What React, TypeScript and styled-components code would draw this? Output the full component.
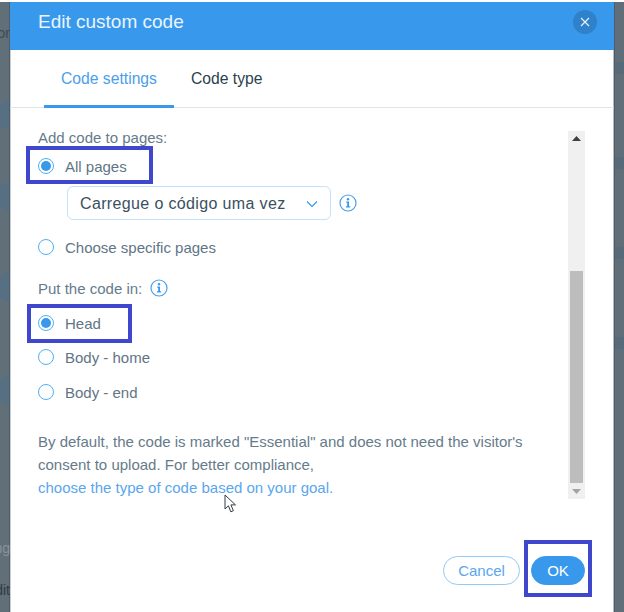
import React from 'react';
import styled, { createGlobalStyle } from 'styled-components';

const GlobalStyle = createGlobalStyle`
	html, body {
		margin: 0;
		padding: 0;
		background: #ffffff;
	}

	body {
		font-family: "Liberation Sans", Arial, sans-serif;
	}
`;

const Page = styled.div`
	position: relative;
	width: 624px;
	height: 612px;
	padding-top: 2px;
	box-sizing: border-box;
	display: flex;
	overflow: hidden;
`;

const LeftBackdrop = styled.div`
	width: 10px;
	flex: none;
	overflow: hidden;
	display: flex;
	flex-direction: column;
	align-items: flex-end;
	font-size: 14px;
	box-shadow: inset -1px 0 0 #4f5c65;
	background:
		radial-gradient(circle at 12px 113px, #566f82 0 15px, transparent 16px),
		radial-gradient(circle at 12px 195px, #566f82 0 15px, transparent 16px),
		radial-gradient(circle at 12px 285px, #566f82 0 15px, transparent 16px),
		radial-gradient(circle at 12px 388px, #566f82 0 15px, transparent 16px),
		#616f79;
`;

const RightBackdrop = styled.div`
	width: 10px;
	flex: none;
	box-shadow: inset 1px 0 0 #4f5c65;
	background:
		linear-gradient(#566a7a, #566a7a) 0 60px / 100% 12px no-repeat,
		linear-gradient(#566a7a, #566a7a) 0 155px / 100% 12px no-repeat,
		linear-gradient(#566a7a, #566a7a) 0 245px / 100% 12px no-repeat,
		linear-gradient(#566a7a, #566a7a) 0 335px / 100% 12px no-repeat,
		#5f6e78;
`;

const BackdropText = styled.span<{ $top: number; $color: string }>`
	margin-top: ${p => p.$top}px;
	line-height: 16px;
	white-space: nowrap;
	color: ${p => p.$color};
`;

const Modal = styled.div`
	width: 604px;
	flex: none;
	display: flex;
	flex-direction: column;
	background: #ffffff;
	box-shadow: inset 1px 0 0 #c9ced2, inset -1px 0 0 #b4bbc1;
`;

const Header = styled.header`
	height: 48px;
	padding: 0 17px 8px 28px;
	box-sizing: border-box;
	display: flex;
	justify-content: space-between;
	align-items: center;
	background: #3899ec;
`;

const Title = styled.h1`
	margin: 0;
	font-size: 19px;
	font-weight: 400;
	color: #eaf4fd;
`;

const CloseButton = styled.button`
	width: 24px;
	height: 24px;
	padding: 0;
	border: 0;
	border-radius: 50%;
	display: flex;
	justify-content: center;
	align-items: center;
	background: #2f81c9;
`;

const Tabs = styled.nav`
	height: 58px;
	padding-left: 34px;
	box-sizing: border-box;
	display: flex;
	border-bottom: 1px solid #dfe5eb;
`;

const Tab = styled.div<{ $active?: boolean }>`
	height: 58px;
	box-sizing: border-box;
	padding: 3px 17px 0;
	display: flex;
	align-items: center;
	font-size: 15.7px;
	color: ${p => (p.$active ? '#4a9eeb' : '#2b3f4e')};
	border-bottom: 3px solid ${p => (p.$active ? '#3899ec' : 'transparent')};
`;

const Body = styled.div`
	height: 392px;
	padding: 23px 29px 0 28px;
	box-sizing: border-box;
	display: flex;
	justify-content: space-between;
`;

const Form = styled.div`
	width: 500px;
	display: flex;
	flex-direction: column;
`;

const Label = styled.div<{ $top: number }>`
	margin-top: ${p => p.$top}px;
	height: 20px;
	display: flex;
	align-items: center;
	gap: 8px;
	font-size: 15px;
	color: #667b8a;
`;

const RadioRow = styled.div<{ $top: number }>`
	position: relative;
	margin-top: ${p => p.$top}px;
	height: 20px;
	display: flex;
	align-items: center;
	gap: 11px;
	font-size: 15px;
	color: #5f7586;
`;

const RadioDot = styled.span<{ $checked?: boolean }>`
	width: 16px;
	height: 16px;
	flex: none;
	box-sizing: border-box;
	border: 1px solid #4eb0f5;
	border-radius: 50%;
	display: flex;
	justify-content: center;
	align-items: center;
	background: #ffffff;

	&::after {
		content: '';
		width: 10px;
		height: 10px;
		border-radius: 50%;
		background: ${p => (p.$checked ? '#3899ec' : 'transparent')};
	}
`;

// the blue boxes are annotations drawn on top of the dialog
const Highlight = styled.span<{ $left: number; $top: number; $width: number; $height: number }>`
	position: absolute;
	left: ${p => p.$left}px;
	top: ${p => p.$top}px;
	width: ${p => p.$width}px;
	height: ${p => p.$height}px;
	box-sizing: border-box;
	border: 4px solid #3f48cc;
	pointer-events: none;
`;

const SelectRow = styled.div`
	margin: 10px 0 0 29px;
	display: flex;
	align-items: center;
	gap: 8px;
`;

const Select = styled.div`
	width: 264px;
	height: 34px;
	padding: 1px 12px 0;
	box-sizing: border-box;
	display: flex;
	justify-content: space-between;
	align-items: center;
	border: 1px solid #c4e2fb;
	border-radius: 6px;
	font-size: 16px;
	letter-spacing: 0.36px;
	color: #3a5060;
`;

const Note = styled.p`
	margin: 28px 0 0;
	font-size: 15px;
	line-height: 23px;
	color: #667b8a;
	white-space: nowrap;
`;

const NoteLink = styled.a`
	color: #5aa6ee;
	text-decoration: none;
`;

const Scrollbar = styled.div`
	width: 17px;
	height: 368px;
	flex: none;
	display: flex;
	flex-direction: column;
	align-items: center;
	background: #f0f0f0;
`;

const ScrollTop = styled.div`
	flex: 1;
	padding-top: 5px;
	display: flex;
	align-items: flex-start;
	justify-content: center;
`;

const ScrollBottom = styled.div`
	height: 16px;
	flex: none;
	display: flex;
	align-items: center;
	justify-content: center;
`;

const ScrollThumb = styled.div`
	width: 13px;
	height: 212px;
	flex: none;
	background: #bdbdbd;
`;

const Footer = styled.footer`
	position: relative;
	flex: 1;
	padding: 0 29px 27px 0;
	box-sizing: border-box;
	display: flex;
	justify-content: flex-end;
	align-items: flex-end;
	gap: 11px;
`;

const Button = styled.button<{ $primary?: boolean }>`
	height: 29px;
	padding: 0;
	box-sizing: border-box;
	width: ${p => (p.$primary ? '54px' : '77px')};
	border: 1px solid ${p => (p.$primary ? '#3899ec' : '#93c9f5')};
	border-radius: 15px;
	font-family: inherit;
	font-size: 15px;
	color: ${p => (p.$primary ? '#ffffff' : '#5aa6ee')};
	background: ${p => (p.$primary ? '#3899ec' : '#ffffff')};
`;

const CursorMark = styled.svg`
	position: absolute;
	left: 224px;
	top: 494px;
`;

const InfoIcon = () => (
	<svg width="18" height="18" viewBox="0 0 18 18">
		<circle cx="9" cy="9" r="8" fill="#ffffff" stroke="#4a9eeb" strokeWidth="1.2" />
		<circle cx="9" cy="5.2" r="1.2" fill="#3899ec" />
		<path d="M7.2 7.6H10v4.6h1.2v1.2H7v-1.2h1.2V8.8h-1z" fill="#3899ec" />
	</svg>
);

const Radio = ({ label, checked, top, children }: { label: string; checked?: boolean; top: number; children?: React.ReactNode }) => (
	<RadioRow $top={top}>
		<RadioDot $checked={checked} />
		{label}
		{children}
	</RadioRow>
);

export default function App() {
	return (
		<Page>
			<GlobalStyle />

			<LeftBackdrop>
				<BackdropText $top={23} $color="#3d4a53">or</BackdropText>
				<BackdropText $top={499} $color="#87929a">ng</BackdropText>
				<BackdropText $top={26} $color="#2f3a42">dit</BackdropText>
			</LeftBackdrop>

			<Modal>
				<Header>
					<Title>Edit custom code</Title>
					<CloseButton aria-label="Close">
						<svg width="10" height="10" viewBox="0 0 10 10">
							<path d="M1 1l8 8M9 1l-8 8" stroke="#e6f1fb" strokeWidth="1.2" fill="none" />
						</svg>
					</CloseButton>
				</Header>

				<Tabs>
					<Tab $active>Code settings</Tab>
					<Tab>Code type</Tab>
				</Tabs>

				<Body>
					<Form>
						<Label $top={-4}>Add code to pages:</Label>
						<Radio label="All pages" checked top={9}>
							<Highlight $left={-12} $top={-10} $width={127} $height={38} />
						</Radio>

						<SelectRow>
							<Select>
								Carregue o código uma vez
								<svg width="12" height="8" viewBox="0 0 12 8">
									<path d="M1 1.5l5 5 5-5" stroke="#3899ec" strokeWidth="1.2" fill="none" />
								</svg>
							</Select>
							<InfoIcon />
						</SelectRow>

						<Radio label="Choose specific pages" top={17} />

						<Label $top={21}>
							Put the code in:
							<InfoIcon />
						</Label>

						<Radio label="Head" checked top={15}>
							<Highlight $left={-11} $top={-9} $width={105} $height={39} />
						</Radio>
						<Radio label="Body - home" top={14} />
						<Radio label="Body - end" top={15} />

						<Note>
							By default, the code is marked "Essential" and does not need the visitor's
							<br />
							consent to upload. For better compliance,
							<br />
							<NoteLink>choose the type of code based on your goal.</NoteLink>
						</Note>
					</Form>

					<Scrollbar>
						<ScrollTop>
							<svg width="9" height="5" viewBox="0 0 9 5">
								<path d="M4.5 0L9 5H0z" fill="#404040" />
							</svg>
						</ScrollTop>
						<ScrollThumb />
						<ScrollBottom>
							<svg width="9" height="5" viewBox="0 0 9 5">
								<path d="M0 0h9L4.5 5z" fill="#a3a3a3" />
							</svg>
						</ScrollBottom>
					</Scrollbar>
				</Body>

				<Footer>
					<Button>Cancel</Button>
					<Button $primary>OK</Button>
					<Highlight $left={514} $top={40} $width={68} $height={57} />
				</Footer>
			</Modal>

			<RightBackdrop />

			<CursorMark width="13" height="20" viewBox="0 0 13 20">
				<path d="M1 1v14l3.4-3.2 2.4 6 2.6-1.1-2.5-5.8H11.5z" fill="#ffffff" stroke="#333d45" strokeWidth="1" />
			</CursorMark>
		</Page>
	);
}
